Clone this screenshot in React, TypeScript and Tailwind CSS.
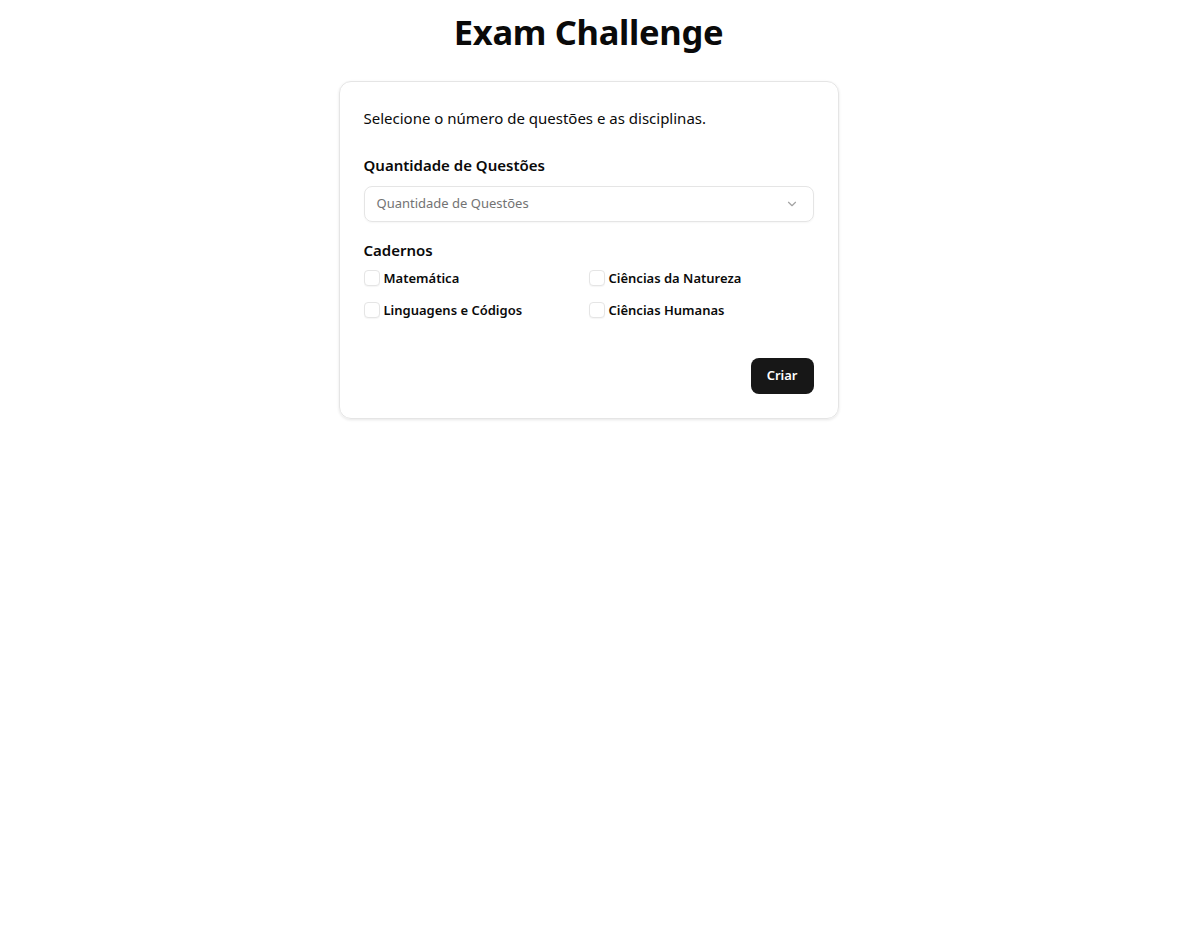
import React from "react";

const font = { fontFamily: '"Noto Sans", "Open Sans", sans-serif' };

function Check({ label }: { label: string }) {
  return (
    <label className="flex items-center gap-[4px]">
      <span className="w-4 h-4 rounded-[4px] border border-[#e5e5e5] bg-white shadow-[0_1px_1px_rgba(0,0,0,0.04)]" />
      <span className="text-[13px] font-semibold text-[#0a0a0a] leading-none">{label}</span>
    </label>
  );
}

export default function App() {
  return (
    <div className="min-h-screen bg-white flex flex-col items-center text-[#0a0a0a]" style={font}>
      <h1 className="mt-[9px] text-[34.5px] font-bold leading-[46px] tracking-[-0.3px]">Exam Challenge</h1>
      <div className="mt-[26px] w-[500px] rounded-xl border border-[#e5e5e5] shadow-[0_1px_3px_rgba(0,0,0,0.1)] px-6 pt-[24px] pb-6">
        <p className="text-[15px] leading-[24px]">Selecione o número de questões e as disciplinas.</p>
        <p className="mt-[23px] text-[15px] font-semibold leading-[24px]">Quantidade de Questões</p>
        <div className="mt-[9px] h-[36px] rounded-lg border border-[#e5e5e5] flex items-center justify-between pl-3 pr-[14px] shadow-[0_1px_2px_rgba(0,0,0,0.04)]">
          <span className="text-[13px] text-[#737373]">Quantidade de Questões</span>
          <svg width="14" height="14" viewBox="0 0 24 24" fill="none" stroke="#a3a3a3" strokeWidth="2" strokeLinecap="round" strokeLinejoin="round">
            <path d="m6 9 6 6 6-6" />
          </svg>
        </div>
        <p className="mt-[16px] text-[15px] font-semibold leading-[24px]">Cadernos</p>
        <div className="mt-[8px] grid grid-cols-2 gap-x-0 gap-y-[16px]">
          <Check label="Matemática" />
          <Check label="Ciências da Natureza" />
          <Check label="Linguagens e Códigos" />
          <Check label="Ciências Humanas" />
        </div>
        <div className="mt-[40px] flex justify-end">
          <button className="h-[36px] px-4 rounded-lg bg-[#171717] text-white text-[13px] font-semibold">Criar</button>
        </div>
      </div>
    </div>
  );
}
